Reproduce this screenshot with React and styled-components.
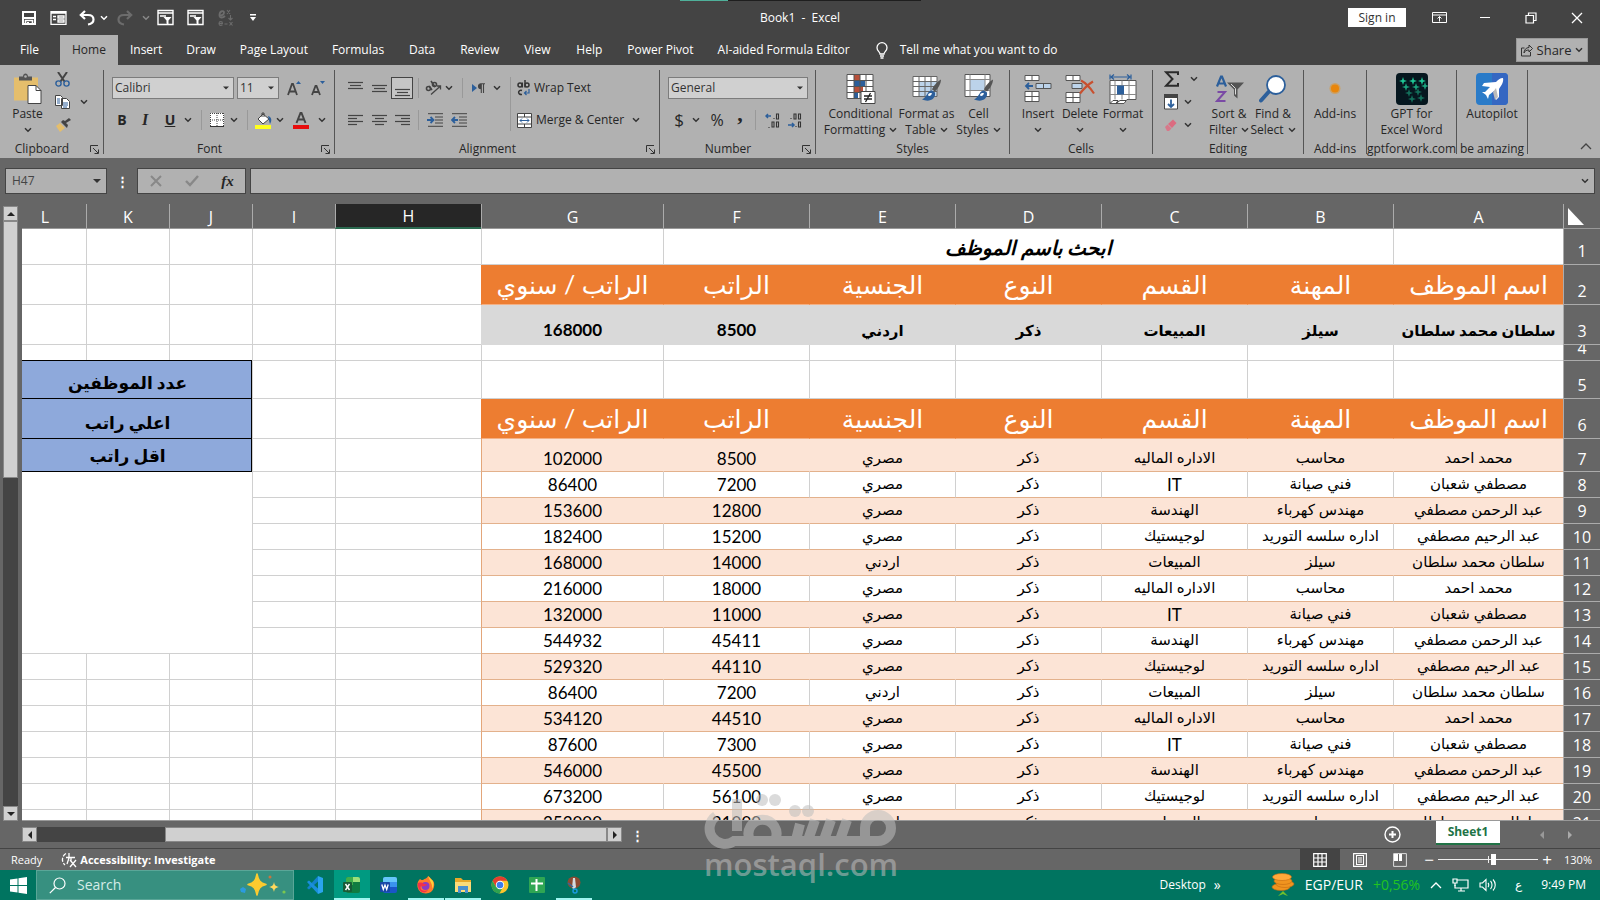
import React from 'react';
import styled, { createGlobalStyle } from 'styled-components';

const GlobalStyle = createGlobalStyle`
  * { box-sizing: border-box; }
  body { margin: 0; background: #666; }
  button, input, select { font: inherit; color: inherit; margin: 0; }
  button { border: none; background: none; padding: 0; }
`;

const employees = [
  { name: 'محمد احمد', job: 'محاسب', dept: 'الاداره الماليه', nation: 'مصري' },
  { name: 'مصطفي شعبان', job: 'فني صيانة', dept: 'IT', nation: 'مصري' },
  { name: 'عبد الرحمن مصطفي', job: 'مهندس كهرباء', dept: 'الهندسة', nation: 'مصري' },
  { name: 'عبد الرحيم مصطفي', job: 'اداره سلسه التوريد', dept: 'لوجيستيك', nation: 'مصري' },
  { name: 'سلطان محمد سلطان', job: 'سيلز', dept: 'المبيعات', nation: 'اردني' },
];

const salaries = [
  8500, 7200, 12800, 15200, 14000, 18000, 11000, 45411,
  44110, 7200, 44510, 7300, 45500, 56100, 21000,
];

const headings = ['اسم الموظف', 'المهنة', 'القسم', 'النوع', 'الجنسية', 'الراتب', 'الراتب / سنوي'];
const letters = ['A', 'B', 'C', 'D', 'E', 'F', 'G', 'H', 'I', 'J', 'K', 'L'];
const widths = [37, 170, 146, 146, 146, 146, 146, 182, 146, 83, 83, 83, 83];
const tabs = ['Insert', 'Draw', 'Page Layout', 'Formulas', 'Data', 'Review', 'View', 'Help', 'Power Pivot', 'AI-aided Formula Editor'];

/* ---------- icons ---------- */

const Chevron = ({ c = '#333' }) => (
  <svg width="8" height="6" viewBox="0 0 8 6" fill="none" stroke={c} strokeWidth="1.5"><path d="M1 1.2 4 4.2 7 1.2" /></svg>
);

const Lines = ({ rows, c = '#444' }) => (
  <svg width="15" height="17" viewBox="0 0 15 17" stroke={c} strokeWidth="1.2">
    {rows.map(([x1, x2, y]) => <path key={y} d={`M${x1} ${y}.5H${x2}`} />)}
  </svg>
);

const SaveIcon = () => (
  <svg width="16" height="16" viewBox="0 0 16 16" fill="none" stroke="#fff" strokeWidth="2">
    <path d="M2 2h12v12H2z" /><path d="M3 8h10" /><path d="M4.500 14v-3.500h7V14" strokeWidth="1.600" /><path d="M6 12h2v2H6z" fill="#fff" stroke="none" />
  </svg>
);
const FormIcon = () => (
  <svg width="17" height="16" viewBox="0 0 17 16" fill="none" stroke="#fff" strokeWidth="1.3">
    <path d="M1 1.7h15v12.6H1zM1 3h15" /><path d="M3 6.5h3M3 9.5h3M8 6h6v2H8zM8 10h6v2H8z" />
  </svg>
);
const UndoIcon = ({ c = '#fff', flip }) => (
  <svg width="16" height="16" viewBox="0 0 16 16" fill="none" stroke={c} strokeWidth="2.2">
    <g transform={flip ? 'matrix(-1 0 0 1 16 0)' : undefined}>
      <path d="M6 1 1.8 5 6 9M2 5h7c3.500 0 5.500 1.800 5.500 4.500S12 14 9 14.500" />
    </g>
  </svg>
);
const FilterFormIcon = () => (
  <svg width="17" height="17" viewBox="0 0 17 17" fill="none" stroke="#fff" strokeWidth="1.4">
    <path d="M1 1.500h15v14H1zM1 4h15M3 7h6" /><path d="M6.500 8h8l-3 3.500v4.500l-2-1.500v-3z" fill="#fff" stroke="none" />
  </svg>
);
const ExIcon = () => (
  <svg width="17" height="18" viewBox="0 0 17 18" fill="none" stroke="#6c6c6c" strokeWidth="1.400">
    <path d="M2 6.500c3 0 5-1 5-3S3 1.500 2.500 5.500 6 9 8 7" strokeWidth="1.800" />
    <path d="M10 1l3 4M13 1l-3 4M13.500 6v5m-2-2 2 2 2-2M2 14.500h3.500c0-2.500-3.500-2.500-3.500 0s2.500 2 3.500 1.300M7.500 15h3M12.500 13l3 3.500M15.500 13l-3 3.500" strokeWidth="1.100" />
  </svg>
);
const CustomizeIcon = () => (
  <svg width="8" height="8" viewBox="0 0 8 8"><path d="M1 0h6v1.400H1zM1 3h6L4 7z" fill="#fff" /></svg>
);
const RibbonModeIcon = () => (
  <svg width="15" height="12" viewBox="0 0 15 12" fill="none" stroke="#fff"><path d="M.5.5h14v10H.5zM.5 3h14M7.500 9.500V4.500M5.500 6.500l2-2 2 2" /></svg>
);
const MinimizeIcon = () => (
  <svg width="10" height="2" viewBox="0 0 10 2"><path d="M0 0h10v1H0z" fill="#fff" /></svg>
);
const RestoreIcon = () => (
  <svg width="12" height="12" viewBox="0 0 12 12" fill="none" stroke="#fff" strokeWidth="1.200"><path d="M1 3.500h7.500v7.500H1zM3.500 3.500V1H11v7.500H8.500" /></svg>
);
const CloseIcon = () => (
  <svg width="12" height="12" viewBox="0 0 12 12" stroke="#fff" strokeWidth="1.300"><path d="m1 1 10 10M11 1 1 11" /></svg>
);
const BulbIcon = () => (
  <svg width="12" height="17" viewBox="0 0 12 17" fill="none" stroke="#fff" strokeWidth="1.300"><path d="M4 12c0-2-3-3-3-6.300A5 5 0 0 1 11 5.700C11 9 8 10 8 12zM4 14h4M4.500 16h3" /></svg>
);
const ShareIcon = () => (
  <svg width="12" height="13" viewBox="0 0 12 13" fill="none" stroke="#333"><path d="M3.500 4H.5v8h9V8M8 1l3.500 3.500L8 8V6C5 6 4 7 3 9c0-3 2-5.500 5-5.500z" /></svg>
);
const PasteIcon = () => (
  <svg width="29" height="31" viewBox="0 0 29 31">
    <path d="M1 4h24v23H1z" fill="#e5be6c" /><path d="M6 7V3h4c0-4 5-4 5 0h4v4z" fill="#555" /><circle cx="12.500" cy="3" r="1.300" fill="#b1b1b1" />
    <path d="M15 12h8l5 5v13H15z" fill="#fff" stroke="#444" /><path d="M23 12v5h5" fill="none" stroke="#444" />
  </svg>
);
const CutIcon = () => (
  <svg width="15" height="15" viewBox="0 0 15 15" fill="none">
    <path d="M3 0 9.500 9.500M12 0 5.500 9.500" stroke="#444" strokeWidth="2" /><circle cx="3.500" cy="11.500" r="2.600" stroke="#2c5f9b" strokeWidth="1.400" /><circle cx="11.500" cy="11.500" r="2.600" stroke="#2c5f9b" strokeWidth="1.400" />
  </svg>
);
const CopyIcon = () => (
  <svg width="15" height="14" viewBox="0 0 15 14" fill="#fff" stroke="#444">
    <path d="M.5.500h5l2 2v8h-7zM6.500 3.500h5l3 3v7h-8z" /><path d="M2 4h3M2 6h3M2 8h3M8 8h5M8 10h5M8 12h4" stroke="#2c5f9b" />
  </svg>
);
const PainterIcon = () => (
  <svg width="16" height="14" viewBox="0 0 16 14"><path d="m1 8 4-3 5 5-5 4z" fill="#e5be6c" /><path d="m6 4 6 6 1-3-2-2 5-3-2-2-4 3-2-1z" fill="#444" /></svg>
);
const BorderIcon = () => (
  <svg width="14" height="14" viewBox="0 0 14 14"><path d="M0 0h14v14H0z" fill="#fff" /><path d="M.5 0v14M7 0v14M13.500 0v14M0 .5h14M0 7h14" stroke="#444" strokeDasharray="1 1" fill="none" /><path d="M0 13.500h14" stroke="#333" /></svg>
);
const FillIcon = () => (
  <svg width="17" height="17" viewBox="0 0 17 17"><path d="m3 7 5-5 6 5-6 5z" fill="#fff" stroke="#444" /><path d="M7 5V1h2v4" fill="none" stroke="#444" /><path d="M13 4c4 1 4 5 2 8-1-2-1-5-2-8z" fill="#2c5f9b" /><path d="M0 13h16v4H0z" fill="#ffff1e" /></svg>
);
const FontColorIcon = () => (
  <svg width="16" height="17" viewBox="0 0 16 17"><path d="m3.500 11 4-10h1l4 10M5 7.500h6" fill="none" stroke="#444" strokeWidth="2" /><path d="M0 13h16v4H0z" fill="#e80c0c" /></svg>
);
const GrowIcon = ({ down }) => (
  <svg width="15" height="16" viewBox="0 0 15 16"><path d={down ? 'm1 15 3.500-9h1L9 15M2.500 12h5' : 'm1 15 4-11h1l4 11M2.500 11.500h6'} fill="none" stroke="#444" strokeWidth="1.800" /><path d={down ? 'M9 1h5l-2.500 3z' : 'M9 4h5l-2.500-3z'} fill="#2c5f9b" /></svg>
);
const OrientIcon = () => (
  <svg width="17" height="16" viewBox="0 0 17 16" fill="none" stroke="#444" strokeWidth="1.600">
    <circle cx="3.500" cy="8.500" r="2" /><path d="m4 6 3 4M6 1l4 6" /><circle cx="9.500" cy="4.500" r="2" /><path d="M6 14.500 15.500 6M12 6h3.500v3.500" strokeWidth="1.300" />
  </svg>
);
const RtlIcon = () => (
  <svg width="14" height="11" viewBox="0 0 14 11"><path d="M0 1v8l5-4z" fill="#2c5f9b" /><path d="M13 .7H9a2.500 2.500 0 0 0 0 5V.7M9.300 1v9M11.500 1v9" fill="#444" stroke="#444" strokeWidth="1.100" /></svg>
);
const IndentIcon = ({ out }) => (
  <svg width="16" height="14" viewBox="0 0 16 14" fill="none"><path d="M1 .7h15M8 4h8M8 7h8M8 10h8M1 13.300h15" stroke="#444" /><path d={out ? 'M7 7H1M4 4 1 7l3 3' : 'M0 7h6M3.500 4l3 3-3 3'} stroke="#2c5f9b" strokeWidth="1.800" /></svg>
);
const WrapIcon = () => (
  <svg width="13" height="16" viewBox="0 0 13 16" fill="none" stroke="#333" strokeWidth="1.500">
    <circle cx="3" cy="5" r="2" /><path d="M5.300 2.500v5M8 0v7.500" /><circle cx="10" cy="5" r="2" /><path d="M5 10.500c-4-1.500-5 4.500 0 4" /><path d="M12 9v4H7.500M9.500 11l-2 2 2 2" stroke="#2c5f9b" strokeWidth="1.200" />
  </svg>
);
const MergeIcon = () => (
  <svg width="15" height="15" viewBox="0 0 15 15" fill="#fff" stroke="#444"><path d="M.5.500h14v14H.5zM.5 4h14M.5 11h14M7.500.500V4M7.500 11v3.500" /><path d="M3 7.500h9M5 5.500l-2 2 2 2M10 5.500l2 2-2 2" stroke="#2c5f9b" fill="none" /></svg>
);
const IncDecimalIcon = () => (
  <svg width="15" height="15" viewBox="0 0 15 15" fill="none"><path d="M6 3H1M3 1 1 3l2 2" stroke="#2c5f9b" strokeWidth="1.500" /><path d="M9 5v1M11.500 1h2v5h-2zM4 14v1M7 9h2v5H7zM11.500 9h2v5h-2z" stroke="#333" strokeWidth="1.100" /></svg>
);
const DecDecimalIcon = () => (
  <svg width="15" height="15" viewBox="0 0 15 15" fill="none"><path d="M1 12h6M5 10l2 2-2 2" stroke="#2c5f9b" strokeWidth="1.500" /><path d="M4 5v1M7 1h2v5H7zM11.500 1h2v5h-2zM9 13v1M11.500 9h2v5h-2z" stroke="#333" strokeWidth="1.100" /></svg>
);
const LauncherIcon = () => (
  <svg width="9" height="9" viewBox="0 0 9 9" fill="none" stroke="#333"><path d="M.5 7V.5H8M3 3l5 5M8.500 4.500v4h-4" /></svg>
);
const Brush = () => (
  <g><path d="M29 6c-4 2-8 7-9 10l3 2c3-3 6-8 6-12z" fill="#555" /><path d="M20 17c-5 0-4 6-10 9 7 3 14 0 13-7z" fill="#2c5f9b" /><path d="M16 22c0-2 2-3 4-2-1 2-2 3-4 2z" fill="#fff" /></g>
);
const CondIcon = () => (
  <svg width="30" height="31" viewBox="0 0 30 31"><path d="M1 1h26v24H1z" fill="#fff" /><path d="M8 1h6v6H8zM8 13h9v6H8z" fill="#b8503a" /><path d="M8 7h11v6H8zM8 19h4v6H8z" fill="#2c5f9b" /><path d="M1 1h26v24H1zM8 1v24M14 1v24M20 1v24M1 7h26M1 13h26M1 19h26" fill="none" stroke="#555" /><path d="M15 18h14v12H15z" fill="#fff" stroke="#444" /><path d="M18 22.500h8M18 25.500h8M24.500 19.500l-5 9" stroke="#222" strokeWidth="1.300" /></svg>
);
const TableIcon = () => (
  <svg width="30" height="31" viewBox="0 0 30 31"><path d="M1 3h24v20H1z" fill="#fff" /><path d="M7 8h18v15H7z" fill="#bcd3ea" /><path d="M1 3h24v20H1zM7 3v20M13 3v20M19 3v20M1 8h24M1 13h24M1 18h24" fill="none" stroke="#666" /><Brush /></svg>
);
const CellStyleIcon = () => (
  <svg width="30" height="31" viewBox="0 0 30 31"><path d="M1 1h25v22H1z" fill="#fff" stroke="#555" /><path d="M6 6h15v11H6z" fill="#bcd3ea" /><path d="M6 1v22M21 1v22M1 6h25M1 17h25" stroke="#888" /><Brush /></svg>
);
const InsertIcon = () => (
  <svg width="28" height="29" viewBox="0 0 28 29" fill="#fff" stroke="#555"><path d="M1 1h14v5H1zM8 1v5M1 17h14v10H1zM8 17v10M1 22h14" /><path d="M12 9h15v5H12zM19.500 9v5" fill="#bcd3ea" /><path d="M9 11.500H2M5 8.500l-3 3 3 3" stroke="#2c5f9b" strokeWidth="1.800" fill="none" /></svg>
);
const DeleteIcon = () => (
  <svg width="30" height="29" viewBox="0 0 30 29" fill="#fff" stroke="#555"><path d="M1 1h14v5H1zM8 1v5M1 18h14v10H1zM8 18v10M1 23h14" /><path d="M7 9h10v5H7z" fill="#bcd3ea" /><path d="M16 6c4 2 9 7 13 13M28 7c-5 3-9 7-13 12" stroke="#c8502f" strokeWidth="2.200" fill="none" /></svg>
);
const FormatIcon = () => (
  <svg width="28" height="31" viewBox="0 0 28 31"><path d="M1 1v5M22 1v5M2 3.500h19M5 1 2 3.500 5 6M18 1l3 2.500L18 6" stroke="#2c5f9b" fill="none" strokeWidth="1.200" /><path d="M1 7h26v19h-9l-3 4H1z" fill="#fff" stroke="#555" /><path d="M6 7v19M20 7v19M1 12h26M1 21h26M13 7v5M13 21v5" stroke="#888" /><path d="M8 12h7v9H8z" fill="#2c5f9b" /><path d="M1 30l3-3h5l-2 3 4-3h6" stroke="#444" fill="none" /></svg>
);
const SumIcon = () => (
  <svg width="16" height="16" viewBox="0 0 16 16"><path d="M14 4V1.200H2L8.500 8 2 14.800h12V12" fill="none" stroke="#2b2b2b" strokeWidth="2" /></svg>
);
const FillDownIcon = () => (
  <svg width="14" height="16" viewBox="0 0 14 16"><path d="M.5 1h13v14H.5z" fill="#fff" stroke="#444" /><path d="M0 0h14v4H0z" fill="#444" /><path d="M7 5.500V13M4 10l3 3 3-3" fill="none" stroke="#2c5f9b" strokeWidth="1.800" /></svg>
);
const EraserIcon = () => (
  <svg width="14" height="13" viewBox="0 0 14 13"><path d="m4 5 5-4.500 3.500 3.500L8 9z" fill="#dc6b80" /><path d="m1 8 2.500-2.500L7.500 9.500 5 12H3z" fill="#d8788a" /></svg>
);
const SortIcon = () => (
  <svg width="29" height="29" viewBox="0 0 29 29" fill="none"><path d="m2 12 4-10h1l4 10M3.500 9h6" stroke="#2c5f9b" strokeWidth="2.200" /><path d="M2.500 17.500H10l-8 9h8.500" stroke="#7a4aa5" strokeWidth="2" /><path d="M12 8h17l-6.500 7v9L19 21v-6z" fill="#555" /><path d="M16 9.500 20.500 14v6" stroke="#ddd" strokeWidth="1" /></svg>
);
const FindIcon = () => (
  <svg width="28" height="29" viewBox="0 0 28 29"><path d="M10 17 2 26" stroke="#2c5f9b" strokeWidth="4" strokeLinecap="round" /><circle cx="17" cy="10.500" r="9" fill="#fff" stroke="#2c5f9b" strokeWidth="1.800" /></svg>
);
const DotIcon = () => (
  <svg width="14" height="29" viewBox="0 0 14 29"><circle cx="7" cy="14" r="5.500" fill="#e8921c" opacity=".5" /><circle cx="7" cy="14" r="4" fill="#e8860c" /></svg>
);
const GptIcon = () => (
  <svg width="32" height="32" viewBox="0 0 32 32"><rect width="32" height="32" rx="4" fill="#06171f" />
    {[[7, 8], [17, 8], [26, 8], [10, 14], [20, 14], [29, 13], [13, 20], [22, 19], [16, 26], [25, 25]].map(([x, y], i) => (
      <path key={i} d={`M${x} ${y - 4}l1 3 3 1-3 1-1 3-1-3-3-1 3-1z`} fill="#1fc795" opacity={i < 3 ? 1 : i < 6 ? 0.8 : 0.5} />
    ))}
  </svg>
);
const AutopilotIcon = () => (
  <svg width="32" height="32" viewBox="0 0 32 32"><rect width="32" height="32" rx="4" fill="#2a7bc8" /><path d="M16 0h12a4 4 0 0 1 4 4v24a4 4 0 0 1-4 4H16z" fill="#3567c2" /><path d="M27 5c-3 0-5 2-7 4L8 10l-2 3 8 1-5 5-3 0 4 3 2 4 1-4 5-4 2 9 3-3 0-8c2-3 5-7 4-11z" fill="#fff" /><path d="m17 19 3-4 2 9-3 3z" fill="#bbb" /></svg>
);
const SearchIcon = () => (
  <svg width="17" height="17" viewBox="0 0 17 17" fill="none" stroke="#fff" strokeWidth="1.200"><circle cx="10.500" cy="6.500" r="5.500" /><path d="M6.500 10.500.8 16.200" /></svg>
);
const SparkIcon = () => (
  <svg width="46" height="24" viewBox="0 0 46 24"><path d="M17 1c1.500 7 3 9 9 10.500-6 1.500-7.500 3.500-9 10.500-1.500-7-3-9-9-10.500C14 10 15.500 8 17 1z" fill="#fccb2f" stroke="#fccb2f" strokeWidth="1.500" strokeLinejoin="round" /><path d="M34 9c.800 3.500 1.500 4.200 5 5-3.500.800-4.200 1.500-5 5-.800-3.500-1.500-4.200-5-5 3.500-.800 4.200-1.500 5-5z" fill="#ffd95c" /><path d="m3 14 3 2-1 4-4-1-1-3z" fill="#2b9be0" /><circle cx="30" cy="4" r="1.500" fill="#c8743f" /><circle cx="44" cy="19" r="1.600" fill="#7ac74f" /></svg>
);
const WindowsIcon = () => (
  <svg width="17" height="17" viewBox="0 0 17 17" fill="#fff"><path d="M0 2.400 7.500 1.400V8H0zM8.500 1.200 17 0v8H8.500zM0 9h7.500v6.600L0 14.600zM8.500 9H17v8l-8.500-1.200z" /></svg>
);
const CodeIcon = () => (
  <svg width="18" height="18" viewBox="0 0 18 18"><path d="m12 0 5 2v14l-5 2z" fill="#2aa4ee" /><path d="M12 0v5.500L3 13.500 1 12z" fill="#1283cc" /><path d="M12 18v-5.500L3 4.500 1 6z" fill="#1a8fdc" /></svg>
);
const ExcelIcon = () => (
  <svg width="18" height="18" viewBox="0 0 18 18"><rect x="3" y="1" width="14" height="16" rx="2" fill="#107c41" /><path d="M3 3a2 2 0 0 1 2-2h5v8H3z" fill="#3fae4b" /><path d="M10 1h5a2 2 0 0 1 2 2v3h-7z" fill="#9ae07a" /><rect x="0" y="6" width="9" height="10" rx="1" fill="#185c37" /><path d="m2.500 8 4 6M6.500 8l-4 6" stroke="#fff" strokeWidth="1.400" /></svg>
);
const WordIcon = () => (
  <svg width="18" height="18" viewBox="0 0 18 18"><rect x="3" y="1" width="14" height="16" rx="2" fill="#1a56c8" /><path d="M3 3a2 2 0 0 1 2-2h10a2 2 0 0 1 2 2v3H3z" fill="#66c6fa" /><path d="M3 6h14v5H3z" fill="#3a93ee" /><rect x="0" y="6" width="10" height="10" rx="1" fill="#1747a8" /><path d="m1.800 8.500 1.500 5 1.700-4.500 1.700 4.500 1.500-5" stroke="#fff" strokeWidth="1.300" fill="none" /></svg>
);
const FirefoxIcon = () => (
  <svg width="18" height="18" viewBox="0 0 18 18"><path d="M3 3c1 1 2 1 3 1 2-2 4-1 5-4 2 1 3 3 4 4 1 0 3 3 2 7a8.500 8.500 0 0 1-16.500 0C0 7 1 5 3 3z" fill="#ff7b2b" /><path d="M11 0c2 2 3 3 4 4 2 2 2 6 0 9 1-5-2-7-4-13z" fill="#ffd23a" /><circle cx="8.500" cy="10" r="4" fill="#8b3bc4" /><path d="M1 7c3-1 5 0 6 1 2 0 3 0 3 1-2 1-4 2-6 1-2 4 3 6 7 4-3 5-11 2-10-7z" fill="#f2304b" /></svg>
);
const FolderIcon = () => (
  <svg width="18" height="16" viewBox="0 0 18 16"><path d="M1 1h6l2 2h8v12H1z" fill="#e8a92a" /><path d="M1 5h16v10H1z" fill="#fbdb7a" /><path d="M4 9h10v7h-3v-3H7v3H4z" fill="#4a90d0" /></svg>
);
const ChromeIcon = () => (
  <svg width="18" height="18" viewBox="0 0 18 18"><circle cx="9" cy="9" r="8.500" fill="#fbc52c" /><path d="M1.600 4.800A8.500 8.500 0 0 1 16.400 4.800H9L5 11z" fill="#e33e2f" /><path d="M1.600 4.800A8.500 8.500 0 0 0 8.500 17.500L12 11H5z" fill="#2fa24f" /><circle cx="9" cy="9" r="4.200" fill="#fff" /><circle cx="9" cy="9" r="3.300" fill="#3b7ded" /></svg>
);
const SheetsIcon = () => (
  <svg width="16" height="16" viewBox="0 0 16 16"><rect width="16" height="16" rx="1" fill="#2fa653" /><path d="M7.500 2v12M2 6.500h12" stroke="#fff" strokeWidth="2" /></svg>
);
const SnipIcon = () => (
  <svg width="14" height="18" viewBox="0 0 14 18"><ellipse cx="7" cy="6.500" rx="6.500" ry="6" fill="#8c4a32" /><path d="M6 2l2 0 1 9-2 2-2-1z" fill="#d5dbe0" /><circle cx="8" cy="15" r="2" fill="none" stroke="#1b9be0" strokeWidth="1.500" /><path d="M1 7l5 4" stroke="#3568a0" strokeWidth="1.500" /></svg>
);
const CoinsIcon = () => (
  <svg width="24" height="24" viewBox="0 0 24 24" fill="#f0941f" stroke="#c46c10" strokeWidth=".6"><ellipse cx="10" cy="14" rx="9" ry="3.500" /><ellipse cx="14" cy="11" rx="9" ry="3.500" /><ellipse cx="12" cy="8" rx="9" ry="3.500" /><ellipse cx="11" cy="4" rx="9.500" ry="3.500" fill="#ffa93a" /><path d="m12 18 5 5-3-1-2-1-2 1-3 1z" fill="#6fbf2c" stroke="none" /></svg>
);
const NetIcon = () => (
  <svg width="17" height="14" viewBox="0 0 17 14" fill="none" stroke="#fff" strokeWidth="1.200"><path d="M5 2h11v8H3V7M9 10v3M6 13h7" /><path d="M1 1h4v4H1zM3 5v3" /></svg>
);
const SoundIcon = () => (
  <svg width="17" height="14" viewBox="0 0 17 14" fill="none" stroke="#fff" strokeWidth="1.100"><path d="M1 5h2.500L7 1.500v11L3.500 9H1zM9 5c1 1 1 3 0 4M11.500 3c2 2 2 6 0 8M14 1.500c3 3 3 8 0 11" /></svg>
);
const CaretUp = ({ c = '#fff' }) => (
  <svg width="12" height="8" viewBox="0 0 12 8" fill="none" stroke={c} strokeWidth="1.300"><path d="m1 7 5-5 5 5" /></svg>
);
const AccessIcon = () => (
  <svg width="17" height="16" viewBox="0 0 17 16" fill="none" stroke="#fff" strokeWidth="1.300"><path d="M5 1.500A7 7 0 0 0 4 13" strokeDasharray="4 1.500" /><path d="M8 1v5M5 5.500h9M8 6l-2 6M10 6v3M9 8l6 7M15 8l-6 7" /></svg>
);
const PlusCircle = () => (
  <svg width="17" height="17" viewBox="0 0 17 17" fill="none" stroke="#fff"><circle cx="8.500" cy="8.500" r="7.500" strokeWidth="1.400" /><path d="M8.500 5v7M5 8.500h7" strokeWidth="2" /></svg>
);
const GridViewIcon = () => (
  <svg width="14" height="14" viewBox="0 0 14 14" fill="none" stroke="#fff" strokeWidth="1.200"><path d="M.7.700h12.600v12.600H.7zM5 .7v12.600M9 .7v12.600M.7 5h12.600M.7 9h12.600" /></svg>
);
const PageViewIcon = () => (
  <svg width="14" height="14" viewBox="0 0 14 14" fill="none" stroke="#fff" strokeWidth="1.100"><path d="M.6.600h12.800v12.800H.6zM3.500 2.500h7v9h-7zM5 5h4M5 7h4M5 9h4" /></svg>
);
const BreakViewIcon = () => (
  <svg width="14" height="14" viewBox="0 0 14 14"><path d="M.6.600h12.800v12.800H.6z" fill="none" stroke="#ddd" /><path d="M1 1h4v7H1zM6 1h3v7H6z" fill="#fff" /></svg>
);
const Arrow = ({ d, c = '#222' }) => (
  <svg width="8" height="8" viewBox="0 0 8 8" fill={c}><path d={{ up: 'M0 6h8L4 2z', down: 'M0 2h8L4 6z', left: 'M6 0v8L2 4z', right: 'M2 0v8l4-4z' }[d]} /></svg>
);

/* ---------- layout ---------- */

const Window = styled.div`
  position: relative;
  display: flex;
  flex-direction: column;
  height: 100vh;
  overflow: hidden;
  background: #666;
  color: #262626;
  font: 12px/16px "Open Sans", "Noto Sans", sans-serif;
`;

const TitleBar = styled.header`
  display: grid;
  grid-template-columns: 1fr auto 1fr;
  height: 35px;
  background: #444;
  color: #fff;
  align-items: center;
`;

const Progress = styled.div`
  position: absolute;
  top: 0;
  left: 50%;
  margin-left: -120px;
  width: 241px;
  height: 1px;
  background: #1e1e1e;
  border-left: 48px solid #4fb09a;
`;

const QuickBar = styled.div`
  display: flex;
  align-items: center;
  padding-left: 18px;
`;

const Slot = styled.button`
  display: flex;
  align-items: center;
  justify-content: center;
  flex: none;
  width: ${p => p.$w || 24}px;
  height: 22px;
  ${p => p.$active && 'border: 1px solid #444; background: #c5c5c5;'}
  ${p => p.$raised && 'padding-bottom: 12px;'}
  font-family: ${p => (p.$serif ? '"Liberation Serif", serif' : 'inherit')};
  font-size: ${p => p.$size || 12}px;
  font-weight: ${p => (p.$bold ? 700 : 400)};
  font-style: ${p => (p.$italic ? 'italic' : 'normal')};
  text-decoration: ${p => (p.$under ? 'underline' : 'none')};
`;

const WindowTools = styled.div`
  display: flex;
  align-items: center;
  justify-content: flex-end;
`;

const SignIn = styled.button`
  width: 58px;
  height: 19px;
  margin-right: 10px;
  background: #fff;
  color: #333;
`;

const TabBar = styled.nav`
  display: flex;
  align-items: center;
  height: 30px;
  padding-right: 12px;
  background: #444;
`;

const Tab = styled.button`
  height: 30px;
  min-width: 52px;
  padding: 0 ${p => (p.$wide ? 21 : 12)}px 0 ${p => (p.$wide ? 20 : 12)}px;
  white-space: nowrap;
  background: ${p => (p.$active ? '#b1b1b1' : 'none')};
  color: ${p => (p.$active ? '#262626' : '#fff')};
`;

const TellMe = styled.button`
  display: flex;
  align-items: center;
  gap: 12px;
  margin-left: 14px;
  color: #fff;
`;

const Share = styled.button`
  display: flex;
  align-items: center;
  justify-content: space-between;
  width: 72px;
  height: 24px;
  margin-left: auto;
  padding: 0 4px;
  border: 1px solid #999;
  background: #b1b1b1;
  font-size: 13px;
`;

const Ribbon = styled.section`
  display: flex;
  height: 93px;
  padding: 5px 0 4px;
  background: #b1b1b1;
`;

const Group = styled.div`
  display: flex;
  flex-direction: column;
  flex: none;
  width: ${p => p.$w}px;
  border-right: 1px solid #555;
`;

const GroupBody = styled.div`
  display: flex;
  flex: 1;
  justify-content: ${p => p.$justify || 'flex-start'};
`;

const GroupLabel = styled.div`
  display: flex;
  align-items: center;
  padding-right: ${p => (p.$launcher ? 4 : 0)}px;
  height: 16px;
  margin-bottom: -3px;
  white-space: nowrap;
  span {
    flex: 1;
    min-width: 0;
    display: flex;
    justify-content: center;
    margin-right: ${p => (p.$launcher ? 6 : 0)}px;
  }
`;

const Stack = styled.div`
  display: flex;
  flex-direction: column;
  gap: ${p => p.$gap ?? 10}px;
  padding: ${p => p.$top ?? 7}px 0 0 ${p => p.$left ?? 8}px;
`;

const Line = styled.div`
  display: flex;
  align-items: center;
  height: ${p => p.$h || 22}px;
`;

const Sep = styled.i`
  flex: none;
  width: ${p => p.$w || 14}px;
  height: ${p => p.$h || 20}px;
  background: linear-gradient(#999, #999) center / 1px 100% no-repeat;
`;

const ComboBox = styled.span`
  display: flex;
  align-items: center;
  margin-right: 3px;
  svg { width: 6px; margin: 0 5px 0 -11px; pointer-events: none; }
`;

const Combo = styled.select`
  appearance: none;
  width: ${p => p.$w}px;
  height: 22px;
  padding: 0 2px;
  border: 1px solid #7c7c7c;
  border-radius: 0;
  color: #333;
  background: #d0d0d0;
`;

const TextTool = styled.button`
  display: flex;
  align-items: center;
  gap: 4px;
  height: 22px;
  white-space: nowrap;
`;

const BigTool = styled.button`
  display: flex;
  flex-direction: column;
  align-items: center;
  flex: none;
  width: ${p => p.$w}px;
  height: 68px;
  padding-top: 2px;
  line-height: 16px;
  white-space: nowrap;
  > svg { height: 34px; }
  span { display: flex; align-items: center; justify-content: center; gap: 4px; height: 16px; }
`;

const Collapse = styled.button`
  margin: auto 8px 0 auto;
`;

const FormulaBar = styled.div`
  display: flex;
  align-items: center;
  height: 46px;
  padding: 0 5px;
`;

const FormulaBox = styled.div`
  display: flex;
  align-items: center;
  justify-content: space-around;
  flex: ${p => (p.$grow ? 1 : 'none')};
  width: ${p => p.$w || 0}px;
  height: 26px;
  margin-right: ${p => p.$gap || 0}px;
  border: 1px solid #444;
  background: #b1b1b1;
  svg { flex: none; margin: 0 5px; }
`;

const PlainInput = styled.input`
  width: 100%;
  min-width: 0;
  border: none;
  outline: none;
  padding: 0 0 0 6px;
  background: none;
  color: #444;
`;

const Dots = styled.span`
  width: 30px;
  color: #fff;
  text-align: center;
  font-weight: 700;
  font-size: 13px;
`;

const Main = styled.main`
  display: flex;
  flex: 1;
  min-height: 0;
`;

const VScroll = styled.div`
  display: flex;
  flex-direction: column;
  justify-content: space-between;
  width: 15px;
  margin: 2px 3px 0 3px;
  background: #444;
`;

const ScrollButton = styled.button`
  display: flex;
  align-items: center;
  justify-content: center;
  flex: none;
  width: 15px;
  height: 15px;
  border: 1px solid #888;
  background: #d0d0d0;
`;

const Thumb = styled.div`
  flex: none;
  background: #d0d0d0;
  border: 1px solid #888;
  ${p => (p.$v ? 'height: 257px; margin-bottom: auto;' : 'flex: 1; margin-left: 128px;')}
`;

const Sheet = styled.div`
  flex: 1;
  min-width: 0;
  margin-left: 1px;
  overflow: hidden;
  border-bottom: 1px solid #999;
`;

const Grid = styled.table`
  table-layout: fixed;
  width: 1597px;
  border-spacing: 0;
  background: #fff;
`;

const Inner = styled.div`
  display: flex;
  align-items: flex-end;
  justify-content: center;
  height: ${p => p.$h - 1}px;
  overflow: hidden;
  white-space: nowrap;
`;

const ColHead = styled.th`
  padding: 0;
  background: ${p => (p.$active ? '#262626' : '#666')};
  color: #fff;
  font-size: 16px;
  font-weight: 400;
  line-height: 22px;
  border-left: 1px solid #ababab;
  border-bottom: ${p => (p.$active ? '2px solid #2b6a50' : '1px solid #999')};
`;

const Corner = styled(ColHead)`
  svg { display: block; margin: 0 auto 0 3px; }
`;

const RowHead = styled.th`
  padding: 0;
  background: #666;
  color: #fff;
  font-size: 16px;
  font-weight: 400;
  line-height: ${p => (p.$tall ? 26 : 23)}px;
  border-left: 1px solid #ababab;
  border-bottom: 1px solid #ababab;
`;

const fills = {
  head: 'background: #ed7d31; color: #fff; font-size: 25px; line-height: 40px; border-color: #ed7d31 #ed7d31 #f4b084;',
  gray: 'background: #d9d9d9; font-weight: 700; line-height: 28px; border-color: #d9d9d9;',
  blue: 'background: #8ea9db; font-weight: 700; line-height: 31px; border-color: #000; border-right: 1px solid #000; box-shadow: 0 -1px #000;',
  peach: 'background: #fce4d6; border-color: #fce4d6; border-bottom-color: #e3b18c;',
  white: 'border-bottom-color: #e3b18c;',
  title: 'font-weight: 700; font-style: italic; font-size: 20px; line-height: 33px;',
};

const Cell = styled.td`
  padding: 0;
  font-family: Lato, "DejaVu Sans", sans-serif;
  font-size: 17px;
  line-height: 24px;
  color: #000;
  border-left: 1px solid #d0d0d0;
  border-bottom: 1px solid #d0d0d0;
  ${p => p.$arabic && 'font-size: 15px; line-height: 27px;'}
  ${p => fills[p.$fill]}
  ${p => p.$edge && 'border-left-color: #e3a67a;'}
`;

const SheetBar = styled.div`
  display: flex;
  align-items: center;
  height: 27px;
  padding: 0 16px 0 22px;
`;

const HScroll = styled.div`
  display: flex;
  width: 600px;
  height: 15px;
  background: #444;
`;

const NewSheet = styled.button`
  display: flex;
  margin-left: auto;
`;

const SheetTab = styled.button`
  width: 64px;
  height: 24px;
  margin: 0 28px 4px 35px;
  background: #fff;
  border-bottom: 2px solid #217346;
  color: #217346;
  font-weight: 700;
`;

const NavArrow = styled.button`
  width: 28px;
  text-align: center;
`;

const StatusBar = styled.footer`
  display: flex;
  align-items: center;
  height: 22px;
  padding-left: 11px;
  border-top: 1px solid #444;
  color: #fff;
  font-size: 11px;
`;

const AccessButton = styled.button`
  display: flex;
  align-items: center;
  gap: 2px;
  margin: 0 auto 0 19px;
  font-weight: 700;
`;

const ViewButton = styled.button`
  display: flex;
  align-items: center;
  justify-content: center;
  width: 40px;
  height: 21px;
  background: ${p => (p.$active ? '#444' : 'none')};
`;

const Zoom = styled.input`
  appearance: none;
  width: 100px;
  height: 12px;
  background:
    linear-gradient(#eee, #eee) center / 1px 7px no-repeat,
    linear-gradient(#eee, #eee) center / 100% 1px no-repeat;
  &::-webkit-slider-thumb {
    appearance: none;
    width: 5px;
    height: 11px;
    background: #fff;
  }
`;

const ZoomStep = styled.button`
  width: 18px;
  font-size: 17px;
`;

const ZoomValue = styled.span`
  margin: 0 8px;
`;

const TaskBar = styled.footer`
  display: flex;
  align-items: center;
  height: 30px;
  background: #007460;
  color: #fff;
`;

const Start = styled.button`
  display: flex;
  justify-content: center;
  width: 36px;
`;

const SearchBox = styled.label`
  display: flex;
  align-items: center;
  width: 258px;
  height: 30px;
  padding: 0 7px 0 12px;
  margin-right: 3px;
  border: 1px solid #5aa698;
  background: #379080;
  svg { flex: none; }
  input { font-size: 14px; padding-left: 11px; }
  input::placeholder { color: #d5ece8; opacity: 1; }
`;

const AppButton = styled.button`
  display: flex;
  align-items: center;
  justify-content: center;
  width: 36px;
  height: 30px;
  margin-right: 1px;
  background: ${p => (p.$active ? '#009a81' : 'none')};
  box-shadow: ${p => (p.$open ? 'inset 0 -2px #9ff5f0' : 'none')};
`;

const Tray = styled.div`
  display: flex;
  align-items: center;
  gap: 10px;
  margin-left: auto;
  padding-right: 14px;
  white-space: nowrap;
`;

const TrayText = styled.span`
  font-size: ${p => (p.$big ? 14 : 12)}px;
  color: ${p => (p.$up ? '#22c322' : '#fff')};
  margin: 0 ${p => p.$m || 0}px;
`;

const Toolbar = styled.div`
  display: flex;
  gap: 8px;
  margin-right: 40px;
`;

const Watermark = styled.div`
  position: absolute;
  left: 44%;
  bottom: 18px;
  width: 192px;
  color: rgb(190, 190, 190);
  opacity: 0.55;
  font: 600 31px/36px "Open Sans", sans-serif;
  text-align: center;
  pointer-events: none;
  svg { display: block; margin-bottom: -8px; }
`;

/* ---------- parts ---------- */

const Big = ({ w, icon, a, b, drop }) => (
  <BigTool $w={w}>
    {icon}
    <span>{a}</span>
    <span>{b}{drop && <Chevron />}</span>
  </BigTool>
);

const RibbonGroup = ({ w, label, launcher, justify, children }) => (
  <Group $w={w}>
    <GroupBody $justify={justify}>{children}</GroupBody>
    <GroupLabel $launcher={launcher}><span>{label}</span>{launcher && <LauncherIcon />}</GroupLabel>
  </Group>
);

const Select = ({ w, value, label }) => (
  <ComboBox>
    <Combo $w={w} aria-label={label} defaultValue={value}><option>{value}</option></Combo>
    <Arrow d="down" c="#333" />
  </ComboBox>
);

const Row = ({ n, h, children }) => (
  <tr>
    <RowHead scope="row" $tall={h > 35}><Inner $h={h}>{n}</Inner></RowHead>
    {children}
  </tr>
);

const Box = ({ h, children, ...rest }) => (
  <Cell {...rest}><Inner $h={h}>{children}</Inner></Cell>
);

const Blank = ({ h, count }) => Array.from({ length: count }, (_, i) => <Box key={i} h={h} />);

const isArabic = v => /[\u0600-\u06ff]/.test(v);

function Spreadsheet() {
  const top = employees[4];
  const summary = [top.name, top.job, top.dept, 'ذكر', top.nation, '8500', '168000'];
  return (
    <Grid>
      <colgroup>{widths.map((w, i) => <col key={i} width={w} />)}</colgroup>
      <thead>
        <tr>
          <Corner><svg width="17" height="17" viewBox="0 0 17 17"><path d="M1 0v17h16z" fill="#fff" /></svg></Corner>
          {letters.map(l => <ColHead key={l} scope="col" $active={l === 'H'}><Inner $h={l === 'H' ? 24 : 25}>{l}</Inner></ColHead>)}
        </tr>
      </thead>
      <tbody>
        <Row n={1} h={36}>
          <Box h={36} />
          <Box h={36} colSpan={5} $fill="title">ابحث باسم الموظف</Box>
          <Blank h={36} count={6} />
        </Row>
        <Row n={2} h={40}>
          {headings.map(t => <Box key={t} h={40} $fill="head">{t}</Box>)}
          <Blank h={40} count={5} />
        </Row>
        <Row n={3} h={40}>
          {summary.map((t, i) => <Box key={i} h={40} $fill="gray" $arabic={isArabic(t)}>{t}</Box>)}
          <Blank h={40} count={5} />
        </Row>
        <Row n={4} h={16}><Blank h={16} count={12} /></Row>
        <Row n={5} h={38}>
          <Blank h={38} count={9} />
          <Box h={38} colSpan={3} $fill="blue">عدد الموظفين</Box>
        </Row>
        <Row n={6} h={40}>
          {headings.map(t => <Box key={t} h={40} $fill="head">{t}</Box>)}
          <Blank h={40} count={2} />
          <Box h={40} colSpan={3} $fill="blue">اعلي راتب</Box>
        </Row>
        {salaries.map((pay, i) => {
          const h = i === 0 ? 33 : 26;
          const e = employees[i % 5];
          const values = [e.name, e.job, e.dept, 'ذكر', e.nation, String(pay), String(pay * 12)];
          return (
            <Row key={i} n={i + 7} h={h}>
              {values.map((v, j) => (
                <Box key={j} h={h} $fill={i % 2 ? 'white' : 'peach'} $edge={j === 6} $arabic={isArabic(v)}>{v}</Box>
              ))}
              <Blank h={h} count={2} />
              {i === 0 && <Box h={h} colSpan={3} $fill="blue">اقل راتب</Box>}
              {i === 1 && <Cell colSpan={3} rowSpan={7} />}
              {i > 7 && <Blank h={h} count={3} />}
            </Row>
          );
        })}
      </tbody>
    </Grid>
  );
}

export default function App() {
  return (
    <Window>
      <GlobalStyle />
      <TitleBar>
        <QuickBar>
          <Slot $w={22}><SaveIcon /></Slot>
          <Slot $w={36}><FormIcon /></Slot>
          <Slot $w={22}><UndoIcon /></Slot>
          <Slot $w={12}><Chevron c="#fff" /></Slot>
          <Slot $w={30}><UndoIcon c="#6c6c6c" flip /></Slot>
          <Slot $w={12}><Chevron c="#888" /></Slot>
          <Slot $w={26}><FilterFormIcon /></Slot>
          <Slot $w={34}><FilterFormIcon /></Slot>
          <Slot $w={26}><ExIcon /></Slot>
          <Slot $w={30}><CustomizeIcon /></Slot>
        </QuickBar>
        <span>Book1&nbsp; -&nbsp; Excel</span>
        <WindowTools>
          <SignIn>Sign in</SignIn>
          <Slot $w={46}><RibbonModeIcon /></Slot>
          <Slot $w={46}><MinimizeIcon /></Slot>
          <Slot $w={46}><RestoreIcon /></Slot>
          <Slot $w={46}><CloseIcon /></Slot>
        </WindowTools>
        <Progress />
      </TitleBar>

      <TabBar>
        <Tab $wide>File</Tab>
        <Tab $active>Home</Tab>
        {tabs.map(t => <Tab key={t}>{t}</Tab>)}
        <TellMe><BulbIcon />Tell me what you want to do</TellMe>
        <Share><ShareIcon />Share<Chevron /></Share>
      </TabBar>

      <Ribbon>
        <RibbonGroup w={104} label="Clipboard" launcher>
          <Big w={55} icon={<PasteIcon />} a="Paste" drop />
          <Stack $gap={5} $top={0} $left={0}>
            <Line $h={18}><CutIcon /></Line>
            <Line $h={18}><CopyIcon /><Slot $w={28}><Chevron /></Slot></Line>
            <Line $h={18}><PainterIcon /></Line>
          </Stack>
        </RibbonGroup>

        <RibbonGroup w={231} label="Font" launcher>
          <Stack>
            <Line>
              <Select w={122} value="Calibri" label="Font" />
              <Select w={42} value="11" label="Font size" />
              <Slot><GrowIcon /></Slot>
              <Slot><GrowIcon down /></Slot>
            </Line>
            <Line>
              <Slot $w={20} $bold $size={14}>B</Slot>
              <Slot $w={26} $bold $italic $serif $size={16}>I</Slot>
              <Slot $bold $under $size={14}>U</Slot>
              <Slot $w={12}><Chevron /></Slot>
              <Sep />
              <Slot $w={18}><BorderIcon /></Slot>
              <Slot $w={16}><Chevron /></Slot>
              <Sep $w={10} />
              <Slot $w={22}><FillIcon /></Slot>
              <Slot $w={12}><Chevron /></Slot>
              <Slot $w={30}><FontColorIcon /></Slot>
              <Slot $w={12}><Chevron /></Slot>
            </Line>
          </Stack>
        </RibbonGroup>

        <RibbonGroup w={325} label="Alignment" launcher>
          <Stack>
            <Line>
              <Slot><Lines rows={[[0, 15, 2], [2, 13, 5], [0, 15, 8]]} /></Slot>
              <Slot><Lines rows={[[0, 15, 5], [2, 13, 8], [0, 15, 11]]} /></Slot>
              <Slot $active $w={22}><Lines rows={[[0, 15, 9], [2, 13, 12], [0, 15, 15]]} /></Slot>
              <Sep $w={10} />
              <Slot $w={20}><OrientIcon /></Slot>
              <Slot $w={12}><Chevron /></Slot>
              <Sep />
              <Slot $w={20}><RtlIcon /></Slot>
              <Slot $w={16}><Chevron /></Slot>
            </Line>
            <Line>
              <Slot><Lines rows={[[0, 15, 3], [0, 9, 6], [0, 15, 9], [0, 9, 12]]} /></Slot>
              <Slot><Lines rows={[[0, 15, 3], [3, 12, 6], [0, 15, 9], [3, 12, 12]]} /></Slot>
              <Slot $w={22}><Lines rows={[[0, 15, 3], [6, 15, 6], [0, 15, 9], [6, 15, 12]]} /></Slot>
              <Sep $w={10} />
              <Slot><IndentIcon /></Slot>
              <Slot><IndentIcon out /></Slot>
            </Line>
          </Stack>
          <Stack $left={0}><Sep $w={10} $h={54} /></Stack>
          <Stack $left={2}>
            <TextTool><WrapIcon />Wrap Text</TextTool>
            <Line><TextTool><MergeIcon />Merge &amp; Center</TextTool><Slot><Chevron /></Slot></Line>
          </Stack>
        </RibbonGroup>

        <RibbonGroup w={156} label="Number" launcher>
          <Stack>
            <Line><Select w={140} value="General" label="Number format" /></Line>
            <Line>
              <Slot $w={22} $size={17}>$</Slot>
              <Slot $w={12}><Chevron /></Slot>
              <Slot $w={30} $size={16}>%</Slot>
              <Slot $w={16} $bold $size={22} $serif $raised>,</Slot>
              <Sep />
              <Slot $w={20}><IncDecimalIcon /></Slot>
              <Slot><DecDecimalIcon /></Slot>
            </Line>
          </Stack>
        </RibbonGroup>

        <RibbonGroup w={194} label="Styles" justify="center">
          <Big w={72} icon={<CondIcon />} a="Conditional" b="Formatting" drop />
          <Big w={60} icon={<TableIcon />} a="Format as" b="Table" drop />
          <Big w={44} icon={<CellStyleIcon />} a="Cell" b="Styles" drop />
        </RibbonGroup>

        <RibbonGroup w={143} label="Cells" justify="center">
          <Big w={42} icon={<InsertIcon />} a="Insert" drop />
          <Big w={42} icon={<DeleteIcon />} a="Delete" drop />
          <Big w={44} icon={<FormatIcon />} a="Format" drop />
        </RibbonGroup>

        <RibbonGroup w={151} label="Editing">
          <Stack $gap={5} $top={0} $left={11}>
            <Line $h={18}><SumIcon /><Slot $w={28}><Chevron /></Slot></Line>
            <Line $h={18}><FillDownIcon /><Slot $w={20}><Chevron /></Slot></Line>
            <Line $h={18}><EraserIcon /><Slot $w={20}><Chevron /></Slot></Line>
          </Stack>
          <Big w={42} icon={<SortIcon />} a="Sort &amp;" b="Filter" drop />
          <Big w={46} icon={<FindIcon />} a="Find &amp;" b="Select" drop />
        </RibbonGroup>

        <RibbonGroup w={63} label="Add-ins" justify="center">
          <Big w={60} icon={<DotIcon />} a="Add-ins" />
        </RibbonGroup>
        <RibbonGroup w={90} label="gptforwork.com" justify="center">
          <Big w={80} icon={<GptIcon />} a="GPT for" b="Excel Word" />
        </RibbonGroup>
        <RibbonGroup w={71} label="be amazing" justify="center">
          <Big w={66} icon={<AutopilotIcon />} a="Autopilot" />
        </RibbonGroup>
        <Collapse aria-label="Collapse ribbon"><CaretUp c="#444" /></Collapse>
      </Ribbon>

      <FormulaBar>
        <FormulaBox $w={102}><PlainInput aria-label="Name box" defaultValue="H47" /><Arrow d="down" c="#333" /></FormulaBox>
        <Dots>⋮</Dots>
        <FormulaBox $w={109} $gap={4}>
          <svg width="12" height="12" viewBox="0 0 12 12" stroke="#888" strokeWidth="2"><path d="m1 1 10 10M11 1 1 11" /></svg>
          <svg width="14" height="12" viewBox="0 0 14 12" fill="none" stroke="#888" strokeWidth="2.400"><path d="m1 6 4 4 8-9" /></svg>
          <Slot $w={22} $serif $italic $bold $size={15}>fx</Slot>
        </FormulaBox>
        <FormulaBox $grow><PlainInput aria-label="Formula" /><Chevron /></FormulaBox>
      </FormulaBar>

      <Main>
        <VScroll>
          <ScrollButton aria-label="Scroll up"><Arrow d="up" /></ScrollButton>
          <Thumb $v />
          <ScrollButton aria-label="Scroll down"><Arrow d="down" /></ScrollButton>
        </VScroll>
        <Sheet dir="rtl"><Spreadsheet /></Sheet>
      </Main>

      <SheetBar>
        <HScroll>
          <ScrollButton aria-label="Scroll left"><Arrow d="left" /></ScrollButton>
          <Thumb />
          <ScrollButton aria-label="Scroll right"><Arrow d="right" /></ScrollButton>
        </HScroll>
        <Dots>⋮</Dots>
        <NewSheet aria-label="New sheet"><PlusCircle /></NewSheet>
        <SheetTab>Sheet1</SheetTab>
        <NavArrow aria-label="Previous sheet"><Arrow d="left" c="#999" /></NavArrow>
        <NavArrow aria-label="Next sheet"><Arrow d="right" c="#aaa" /></NavArrow>
      </SheetBar>

      <StatusBar>
        <span>Ready</span>
        <AccessButton><AccessIcon />Accessibility: Investigate</AccessButton>
        <ViewButton $active aria-label="Normal view"><GridViewIcon /></ViewButton>
        <ViewButton aria-label="Page layout view"><PageViewIcon /></ViewButton>
        <ViewButton aria-label="Page break view"><BreakViewIcon /></ViewButton>
        <ZoomStep>−</ZoomStep>
        <Zoom type="range" min="0" max="100" defaultValue="56" aria-label="Zoom" />
        <ZoomStep>+</ZoomStep>
        <ZoomValue>130%</ZoomValue>
      </StatusBar>

      <TaskBar>
        <Start aria-label="Start"><WindowsIcon /></Start>
        <SearchBox><SearchIcon /><PlainInput aria-label="Search" placeholder="Search" /><SparkIcon /></SearchBox>
        <AppButton aria-label="Code"><CodeIcon /></AppButton>
        <AppButton aria-label="Excel" $active $open><ExcelIcon /></AppButton>
        <AppButton aria-label="Word"><WordIcon /></AppButton>
        <AppButton aria-label="Firefox" $open><FirefoxIcon /></AppButton>
        <AppButton aria-label="Files" $open><FolderIcon /></AppButton>
        <AppButton aria-label="Chrome"><ChromeIcon /></AppButton>
        <AppButton aria-label="Sheets"><SheetsIcon /></AppButton>
        <AppButton aria-label="Snipping tool" $open><SnipIcon /></AppButton>
        <Tray>
          <Toolbar>
            <TrayText>Desktop</TrayText>
            <TrayText $big>»</TrayText>
          </Toolbar>
          <CoinsIcon />
          <TrayText $big>EGP/EUR</TrayText>
          <TrayText $big $up>+0,56%</TrayText>
          <CaretUp />
          <NetIcon />
          <SoundIcon />
          <TrayText $m={9}>ع</TrayText>
          <TrayText>9:49 PM</TrayText>
        </Tray>
      </TaskBar>

      <Watermark>
        <svg width="192" height="62" viewBox="0 0 192 62" fill="none" stroke="currentColor" strokeWidth="10">
          <path d="M33 7v32M12 24a14 14 0 1 0 18 25H174a13 13 0 1 0-13-13v11M104 48l7-20M120 48l7-20M136 48l7-20M92 48l4-16M46 48a14 14 0 1 1 25 0" />
          <g fill="currentColor" stroke="none"><circle cx="58" cy="8" r="6" /><circle cx="71" cy="8" r="6" /><circle cx="91" cy="19" r="6" /><circle cx="104" cy="19" r="6" /></g>
        </svg>
        mostaql.com
      </Watermark>
    </Window>
  );
}
